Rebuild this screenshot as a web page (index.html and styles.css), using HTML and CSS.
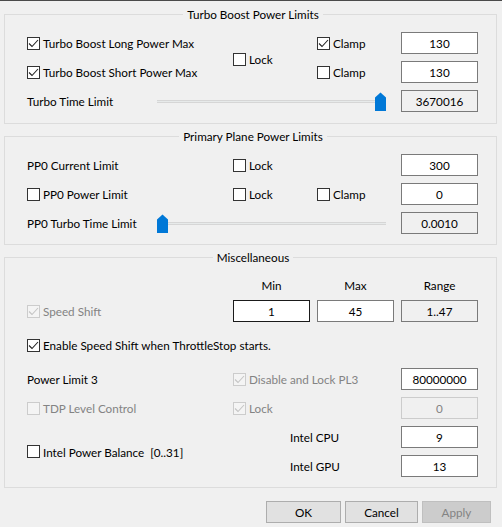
FILE: index.html
```html
<!DOCTYPE html>
<html>
<head>
<meta charset="utf-8">
<link rel="stylesheet" href="styles.css">
</head>
<body>
<div class="dialog">
  <fieldset class="group">
    <legend>Turbo Boost Power Limits</legend>
    <div class="grid g3rows">
      <label class="cb c1 r1"><span class="box on"><svg viewBox="0 0 13 13"><polyline points="2,6.5 5,9.5 11,3"/></svg></span>Turbo Boost Long Power Max</label>
      <label class="cb c2 r12 lockmid"><span class="box"></span>Lock</label>
      <label class="cb c3 r1"><span class="box on"><svg viewBox="0 0 13 13"><polyline points="2,6.5 5,9.5 11,3"/></svg></span>Clamp</label>
      <div class="field c4 r1">130</div>

      <label class="cb c1 r2"><span class="box on"><svg viewBox="0 0 13 13"><polyline points="2,6.5 5,9.5 11,3"/></svg></span>Turbo Boost Short Power Max</label>
      <label class="cb c3 r2"><span class="box"></span>Clamp</label>
      <div class="field c4 r2">130</div>

      <div class="slider-row c13 r3">
        <span class="slider-label">Turbo Time Limit</span>
        <div class="track end">
          <svg class="thumb" viewBox="0 0 11 19"><path d="M0 5.5 L5.5 0.5 L11 5.5 V19 H0 Z"/></svg>
        </div>
      </div>
      <div class="field ro c4 r3">3670016</div>
    </div>
  </fieldset>

  <fieldset class="group">
    <legend>Primary Plane Power Limits</legend>
    <div class="grid g3rows">
      <span class="text c1 r1">PP0 Current Limit</span>
      <label class="cb c2 r1"><span class="box"></span>Lock</label>
      <div class="field c4 r1">300</div>

      <label class="cb c1 r2"><span class="box"></span>PP0 Power Limit</label>
      <label class="cb c2 r2"><span class="box"></span>Lock</label>
      <label class="cb c3 r2"><span class="box"></span>Clamp</label>
      <div class="field c4 r2">0</div>

      <div class="slider-row c13 r3">
        <span class="slider-label">PP0 Turbo Time Limit</span>
        <div class="track">
          <svg class="thumb" viewBox="0 0 11 19"><path d="M0 5.5 L5.5 0.5 L11 5.5 V19 H0 Z"/></svg>
        </div>
      </div>
      <div class="field ro c4 r3">0.0010</div>
    </div>
  </fieldset>

  <fieldset class="group last">
    <legend>Miscellaneous</legend>
    <div class="grid misc">
      <span class="head c2 r1">Min</span>
      <span class="head c3 r1">Max</span>
      <span class="head c4 r1">Range</span>

      <label class="cb dis c1 r2"><span class="box"><svg viewBox="0 0 13 13"><polyline points="2,6.5 5,9.5 11,3"/></svg></span>Speed Shift</label>
      <div class="field focus c2 r2">1</div>
      <div class="field c3 r2">45</div>
      <div class="field ro c4 r2">1..47</div>

      <label class="cb c14 r3"><span class="box on"><svg viewBox="0 0 13 13"><polyline points="2,6.5 5,9.5 11,3"/></svg></span>Enable Speed Shift when ThrottleStop starts.</label>

      <span class="text c1 r4">Power Limit 3</span>
      <label class="cb dis c23 r4"><span class="box"><svg viewBox="0 0 13 13"><polyline points="2,6.5 5,9.5 11,3"/></svg></span>Disable and Lock PL3</label>
      <div class="field c4 r4">80000000</div>

      <label class="cb dis c1 r5"><span class="box"></span>TDP Level Control</label>
      <label class="cb dis c2 r5"><span class="box"><svg viewBox="0 0 13 13"><polyline points="2,6.5 5,9.5 11,3"/></svg></span>Lock</label>
      <div class="field disabled c4 r5">0</div>

      <label class="cb c1 r67"><span class="box"></span>Intel Power Balance&nbsp;&nbsp;[0..31]</label>
      <span class="text sub c23 r6">Intel CPU</span>
      <div class="field c4 r6">9</div>
      <span class="text sub c23 r7">Intel GPU</span>
      <div class="field c4 r7">13</div>
    </div>
  </fieldset>

  <div class="buttons">
    <button class="btn ok">OK</button>
    <button class="btn cancel">Cancel</button>
    <button class="btn apply" disabled>Apply</button>
  </div>
</div>
</body>
</html>
```

FILE: styles.css
```css
html, body {
  margin: 0;
  padding: 0;
  background: #f0f0f0;
}

body {
  width: 502px;
  height: 527px;
  overflow: hidden;
  font-family: Lato, "Noto Sans", sans-serif;
  font-size: 11.7px;
  line-height: 16px;
  color: #000;
}

.dialog {
  border-top: 1px solid #4a4a4a;
  padding: 5px 5px 0 4px;
}

.group {
  margin: 0;
  padding: 10px 17px 11px 22px;
  border: 1px solid #dcdcdc;
  min-width: 0;
}

.group + .group {
  margin-top: 4px;
  padding-bottom: 10px;
}

.group legend {
  margin: 0 auto;
  padding: 0 4px;
  height: 16px;
  box-sizing: border-box;
  line-height: 17px;
}

.grid {
  display: grid;
  grid-template-columns: 206px 84px 84px 77px;
  row-gap: 7px;
}

.g3rows {
  grid-template-rows: 22px 22px 22px;
}

.misc {
  grid-template-rows: 18px 22px 32px 22px 22px 22px 22px;
}

.c1 { grid-column: 1; }
.c2 { grid-column: 2; }
.c3 { grid-column: 3; }
.c4 { grid-column: 4; }
.c13 { grid-column: 1 / 4; }
.c14 { grid-column: 1 / 5; }
.c23 { grid-column: 2 / 4; }

.r1 { grid-row: 1; }
.r2 { grid-row: 2; }
.r3 { grid-row: 3; }
.r4 { grid-row: 4; }
.r5 { grid-row: 5; }
.r6 { grid-row: 6; }
.r7 { grid-row: 7; }
.r12 { grid-row: 1 / 3; }
.r67 { grid-row: 6 / 8; }

.text {
  display: flex;
  align-items: center;
}

.text.sub {
  padding-left: 57px;
}

.head {
  display: flex;
  align-items: flex-end;
  justify-content: center;
  width: 77px;
  height: 18px;
}

.cb {
  display: flex;
  align-items: center;
  gap: 3px;
  white-space: nowrap;
  min-height: 0;
}

.lockmid {
  padding-top: 3px;
}

.box {
  width: 13px;
  height: 13px;
  box-sizing: border-box;
  border: 1px solid #333;
  background: #fff;
  flex: none;
  position: relative;
}

.box svg {
  position: absolute;
  left: -1px;
  top: -1px;
  width: 13px;
  height: 13px;
  fill: none;
  stroke: #222;
  stroke-width: 1.1;
}

.cb.dis {
  color: #838383;
}

.cb.dis .box {
  border-color: #cccccc;
  background: #f4f4f4;
}

.cb.dis .box svg {
  stroke: #c4c4c4;
}

.field {
  box-sizing: border-box;
  width: 77px;
  height: 22px;
  border: 1px solid #7a7a7a;
  background: #fff;
  display: flex;
  align-items: center;
  justify-content: center;
  padding-bottom: 1px;
}

.field.ro {
  background: #f0f0f0;
}

.field.focus {
  border-color: #1a1a1a;
}

.field.disabled {
  background: #f0f0f0;
  border-color: #cccccc;
  color: #838383;
}

.slider-row {
  display: flex;
  align-items: center;
  margin-right: 15px;
}

.slider-label {
  width: 130px;
  flex: none;
}

.track {
  flex: 1;
  height: 22px;
  display: flex;
  align-items: center;
  justify-content: flex-start;
  background: linear-gradient(to bottom,
    transparent 10px, #d6d6d6 10px, #d6d6d6 11px,
    #e7eaea 11px, #e7eaea 12px,
    #d6d6d6 12px, #d6d6d6 13px, transparent 13px);
}

.track.end {
  justify-content: flex-end;
}

.thumb {
  width: 11px;
  height: 19px;
  fill: #0078d7;
}

.buttons {
  display: flex;
  gap: 4px;
  margin-top: 13px;
  padding-left: 262px;
}

.btn {
  height: 22px;
  box-sizing: border-box;
  border: 1px solid #adadad;
  background: #e1e1e1;
  font: inherit;
  line-height: 16px;
  color: #000;
  padding: 0 0 1px;
}

.btn.ok { width: 75px; }
.btn.cancel { width: 73px; }
.btn.apply {
  width: 69px;
  background: #cccccc;
  border-color: #bfbfbf;
  color: #838383;
}
```
